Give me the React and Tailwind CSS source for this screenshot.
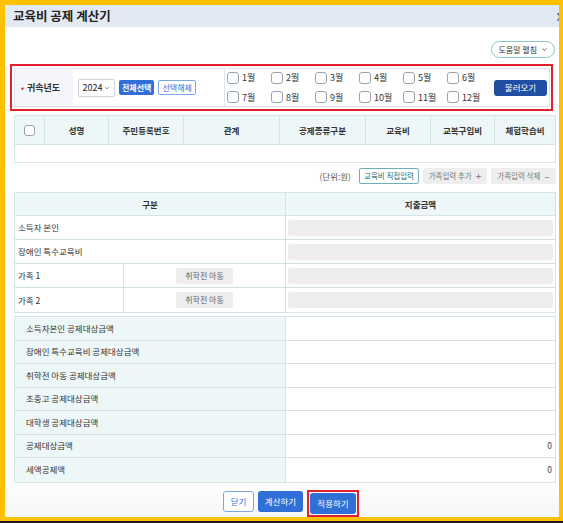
const font = { fontFamily: '"Noto Sans CJK KR", "Noto Sans", sans-serif' };

const Box = ({ size = "w-[12px] h-[12px]" }) => (
  <span className={`${size} inline-block rounded-[3px] border border-[#9aa3ad] bg-white shrink-0`} />
);

const months = [
  ["1월", "2월", "3월", "4월", "5월", "6월"],
  ["7월", "8월", "9월", "10월", "11월", "12월"],
];

const cols = [
  ["", "w-[30px]"],
  ["성명", "w-[64px]"],
  ["주민등록번호", "w-[75px]"],
  ["관계", "w-[96px]"],
  ["공제종류구분", "w-[86px]"],
  ["교육비", "w-[65px]"],
  ["교복구입비", "w-[64px]"],
  ["체험학습비", "flex-1"],
];

const sums = [
  ["소득자본인 공제대상금액", ""],
  ["장애인 특수교육비 공제대상금액", ""],
  ["취학전 아동 공제대상금액", ""],
  ["초중고 공제대상금액", ""],
  ["대학생 공제대상금액", ""],
  ["공제대상금액", "0"],
  ["세액공제액", "0"],
];

export default function App() {
  return (
    <div className="w-[563px] h-[523px] bg-[#1a1a1a] overflow-hidden" style={font}>
      <div className="h-[521px] bg-[#ffc000] pt-[5px] pl-[5px] pr-[4px] pb-[4px]">
        <div className="h-full bg-white flex flex-col text-[#333]">
          {/* title */}
          <div className="h-[22px] bg-[#e3e9f3] flex items-center justify-between pl-[8px] overflow-hidden">
            <span className="text-[12.5px] font-bold text-[#222]">교육비 공제 계산기</span>
            <span className="text-[11px] text-[#333] mr-[-4px]">X</span>
          </div>

          {/* help */}
          <div className="flex justify-end pr-[4px] mt-[14px]">
            <button className="h-[17px] px-[6px] rounded-full border border-[#8cc6c9] text-[8px] text-[#333] flex items-center gap-[4px]">
              도움말 펼침
              <svg width="7" height="7" viewBox="0 0 10 10"><path d="M2 3.5l3 3 3-3" fill="none" stroke="#555" strokeWidth="1.3" /></svg>
            </button>
          </div>

          {/* search box */}
          <div className="mt-[6px] ml-[5px] mr-[6px] border-2 border-[#e3202c] p-[2px] pr-[1px]">
            <div className="h-[39px] border border-[#dde3ea] flex">
              <div className="w-[58px] bg-[#f4f6fb] flex items-center pl-[6px] gap-[3px] text-[9px] font-semibold text-[#333]">
                <span className="text-[#e3202c] text-[8px]">•</span>귀속년도
              </div>
              <div className="w-[152px] flex items-center pl-[5px] gap-[4px] border-r border-[#dde3ea]">
                <div className="w-[37px] h-[18px] border border-[#cfd4da] rounded-[2px] flex items-center justify-center gap-[2px] text-[9px] text-[#222]">
                  2024
                  <svg width="6" height="6" viewBox="0 0 10 10"><path d="M2 3.5l3 3 3-3" fill="none" stroke="#666" strokeWidth="1.3" /></svg>
                </div>
                <button className="h-[15px] px-[3px] rounded-[2px] bg-[#2f6fd6] text-white text-[8px] font-semibold">전체선택</button>
                <button className="h-[15px] px-[3px] rounded-[2px] border border-[#7aa7e8] text-[#2f6fd6] text-[8px]">선택해제</button>
              </div>
              <div className="flex-1 flex flex-col justify-center gap-[6px] pl-[2px]">
                {months.map((row, i) => (
                  <div key={i} className="flex">
                    {row.map((m) => (
                      <div key={m} className="w-[44px] flex items-center gap-[3px] text-[9px] text-[#333]">
                        <Box />
                        {m}
                      </div>
                    ))}
                  </div>
                ))}
              </div>
              <div className="flex items-center pr-[2px]">
                <button className="w-[53px] h-[16px] rounded-[3px] bg-[#1f4ea3] text-white text-[8.5px]">불러오기</button>
              </div>
            </div>
          </div>

          {/* family table */}
          <div className="mt-[4px] ml-[9px] mr-[3px] border border-[#d5e4e7]">
            <div className="h-[29px] bg-[#eef7f7] flex border-b border-[#d5e4e7]">
              {cols.map(([t, w], i) => (
                <div
                  key={i}
                  className={`${w} flex items-center justify-center text-[8.5px] font-semibold text-[#333] ${i < cols.length - 1 ? "border-r border-[#d5e4e7]" : ""}`}
                >
                  {i === 0 ? <Box size="w-[11px] h-[11px]" /> : t}
                </div>
              ))}
            </div>
            <div className="h-[17px]" />
          </div>

          {/* tool row */}
          <div className="mt-[5px] mr-[3px] flex justify-end items-center gap-[4px] h-[16px]">
            <span className="text-[8.5px] text-[#555] mr-[4px]">(단위:원)</span>
            <button className="h-[16px] w-[60px] rounded-[2px] border border-[#6fb0b6] text-[7.5px] text-[#2b6f7a]">교육비 직접입력</button>
            <button className="h-[16px] w-[64px] rounded-[2px] bg-[#eeeeee] text-[7.5px] text-[#777] flex items-center justify-center gap-[4px]">
              가족입력 추가 <span className="text-[10px] leading-none">+</span>
            </button>
            <button className="h-[16px] w-[65px] rounded-[2px] bg-[#eeeeee] text-[7.5px] text-[#777] flex items-center justify-center gap-[4px]">
              가족입력 삭제 <span className="text-[10px] leading-none">–</span>
            </button>
          </div>

          {/* expense table */}
          <div className="mt-[8px] ml-[9px] mr-[3px] border border-[#d5e4e7] text-[8.5px]">
            <div className="h-[23px] bg-[#eef7f7] flex border-b border-[#d5e4e7] font-semibold">
              <div className="w-[271px] flex items-center justify-center border-r border-[#d5e4e7]">구분</div>
              <div className="flex-1 flex items-center justify-center">지출금액</div>
            </div>
            {["소득자 본인", "장애인 특수교육비", "가족 1", "가족 2"].map((label, i) => (
              <div key={label} className={`h-[24px] flex ${i < 3 ? "border-b border-[#cfdfe2]" : ""}`}>
                {i < 2 ? (
                  <div className="w-[271px] flex items-center pl-[3px] border-r border-[#d5e4e7]">{label}</div>
                ) : (
                  <>
                    <div className="w-[109px] flex items-center pl-[3px] border-r border-[#d5e4e7]">{label}</div>
                    <div className="w-[162px] flex items-center justify-center border-r border-[#d5e4e7]">
                      <span className="h-[16px] w-[57px] bg-[#eeeeee] rounded-[2px] flex items-center justify-center text-[8px] text-[#666]">취학전 아동</span>
                    </div>
                  </>
                )}
                <div className="flex-1 flex items-center px-[2px]">
                  <div className="h-[16px] w-full rounded-[3px] bg-[#ededed]" />
                </div>
              </div>
            ))}
          </div>

          {/* summary table */}
          <div className="mt-[3px] ml-[9px] mr-[3px] border border-[#d5e4e7] text-[8.5px]">
            {sums.map(([label, v], i) => (
              <div key={label} className={`h-[23.5px] flex ${i < sums.length - 1 ? "border-b border-[#d3e0e3]" : ""}`}>
                <div className="w-[271px] bg-[#eef7f7] flex items-center pl-[11px] border-r border-[#d5e4e7]">{label}</div>
                <div className="flex-1 flex items-center justify-end pr-[3px] text-[#444]">{v}</div>
              </div>
            ))}
          </div>

          {/* footer */}
          <div className="flex-1 bg-gradient-to-b from-white to-[#f6f6f6] flex items-start justify-center pl-[18px] pt-[8px] gap-[4px]">
            <button className="h-[21px] w-[31px] rounded-[3px] border border-[#7aa7e8] bg-white text-[8.5px] text-[#2f6fd6]">닫기</button>
            <button className="h-[21px] w-[45px] rounded-[3px] bg-[#2f6fd6] text-[8.5px] text-white">계산하기</button>
            <div className="border-2 border-[#e3202c] p-[1px] -mt-[1px]">
              <button className="h-[21px] w-[46px] rounded-[3px] bg-[#2f6fd6] text-[8.5px] text-white block">적용하기</button>
            </div>
          </div>
        </div>
      </div>
    </div>
  );
}
